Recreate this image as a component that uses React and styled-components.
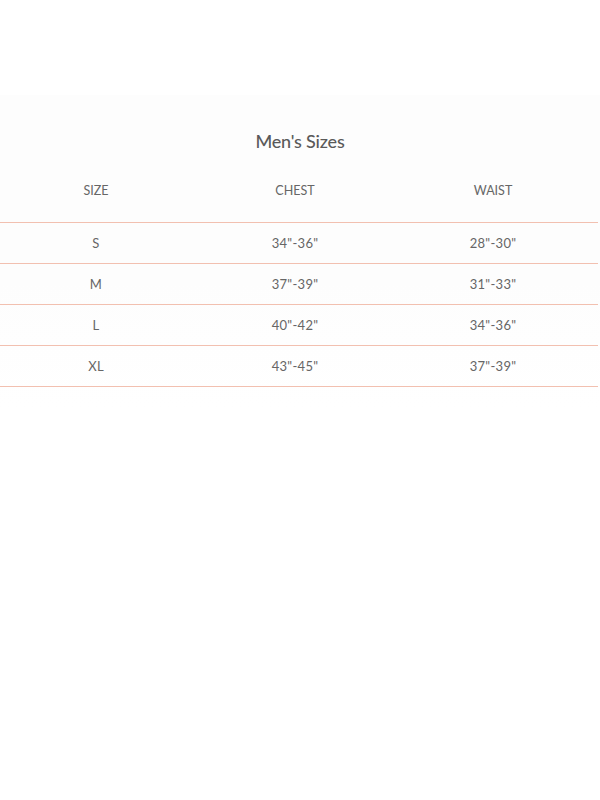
import styled, { createGlobalStyle } from 'styled-components'

const Global = createGlobalStyle`
  body {
    margin: 0;
    background: #ffffff;
    font-family: "Lato", "Open Sans", sans-serif;
    color: #5f5f5f;
  }
`

const rows = [
  ['S', '34"-36"', '28"-30"'],
  ['M', '37"-39"', '31"-33"'],
  ['L', '40"-42"', '34"-36"'],
  ['XL', '43"-45"', '37"-39"'],
]

const App = () => {
  return (
    <>
      <Global />
      <Page>
        <Panel>
          <Title>Men's Sizes</Title>
          <Table>
            <HeadRow>
              <HeadCell>Size</HeadCell>
              <HeadCell>Chest</HeadCell>
              <HeadCell>Waist</HeadCell>
            </HeadRow>
            {rows.map((r) => (
              <Row key={r[0]}>
                {r.map((c, i) => (
                  <Cell key={i}>{c}</Cell>
                ))}
              </Row>
            ))}
          </Table>
        </Panel>
      </Page>
    </>
  )
}

const Page = styled.div`
  width: 600px;
  height: 800px;
  padding-top: 95px;
  box-sizing: border-box;
`

const Panel = styled.div`
  background: linear-gradient(#fdfdfd, #fdfdfd 60%, #ffffff);
  padding-top: 33px;
  padding-bottom: 20px;
`

const Title = styled.h2`
  margin: 0;
  text-align: center;
  font-size: 18px;
  font-weight: 500;
  letter-spacing: -0.2px;
  color: #5a5a5a;
  line-height: 26px;
`

const Table = styled.div`
  width: 598px;
  margin-top: 28px;
`

const cols = '192px 206px 190px 1fr'

const HeadRow = styled.div`
  display: grid;
  grid-template-columns: ${cols};
  height: 40px;
  align-items: start;
  border-bottom: 1px solid #f2c0b0;
`

const HeadCell = styled.div`
  text-align: center;
  text-transform: uppercase;
  font-size: 12.5px;
  line-height: 18px;
  color: #666;
`

const Row = styled.div`
  display: grid;
  grid-template-columns: ${cols};
  height: 40px;
  align-items: center;
  border-bottom: 1px solid #f2c0b0;
`

const Cell = styled.div`
  text-align: center;
  font-size: 13px;
  color: #666;
  letter-spacing: 0.3px;
`

export default App
